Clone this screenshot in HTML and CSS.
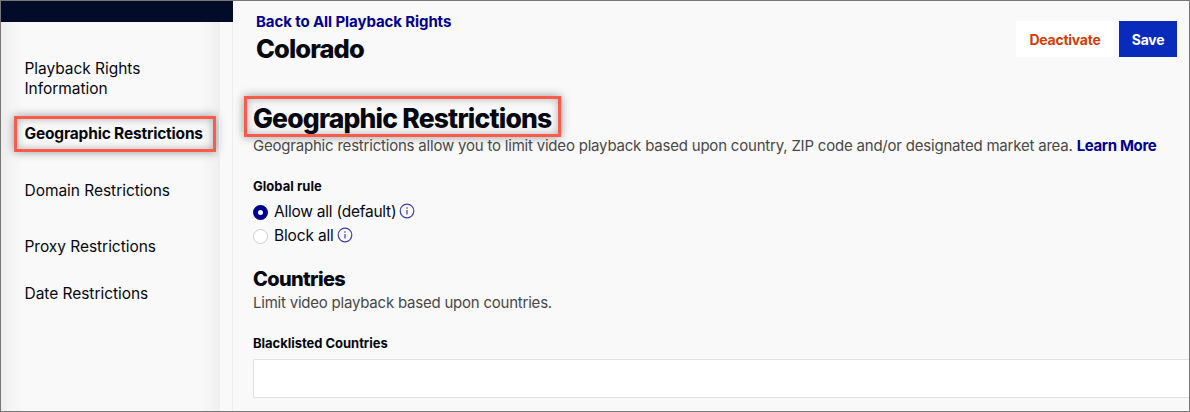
FILE: index.html
```html
<!DOCTYPE html>
<html lang="en">
<head>
<meta charset="utf-8">
<title>Playback Rights</title>
<link rel="stylesheet" href="styles.css">
</head>
<body>
<div class="app">
  <aside class="side">
    <div class="topbar"></div>
    <div class="side-body">
      <nav class="nav">
        <a class="nav-item info">Playback Rights Information</a>
        <a class="nav-item active">Geographic Restrictions</a>
        <a class="nav-item domain">Domain Restrictions</a>
        <a class="nav-item proxy">Proxy Restrictions</a>
        <a class="nav-item date">Date Restrictions</a>
      </nav>
      <div class="gutter"></div>
    </div>
  </aside>
  <main class="main">
    <header class="head">
      <div class="titles">
        <a class="back">Back to All Playback Rights</a>
        <h1 class="name">Colorado</h1>
      </div>
      <div class="actions">
        <button class="btn deactivate">Deactivate</button>
        <button class="btn save">Save</button>
      </div>
    </header>
    <h2 class="section-title">Geographic Restrictions</h2>
    <p class="desc"><span>Geographic restrictions allow you to limit video playback based upon country, ZIP code and/or designated market area.</span><a class="learn">Learn More</a></p>
    <h4 class="label rule-label">Global rule</h4>
    <div class="option">
      <i class="radio on"></i><span class="opt-allow">Allow all (default)</span>
      <svg class="info-icon" viewBox="0 0 16 16"><circle cx="8" cy="8" r="6.8"/><path d="M8 7v4.5M8 4.2v1.5"/></svg>
    </div>
    <div class="option">
      <i class="radio"></i><span class="opt-block">Block all</span>
      <svg class="info-icon" viewBox="0 0 16 16"><circle cx="8" cy="8" r="6.8"/><path d="M8 7v4.5M8 4.2v1.5"/></svg>
    </div>
    <h3 class="countries">Countries</h3>
    <p class="countries-desc">Limit video playback based upon countries.</p>
    <h4 class="label list-label">Blacklisted Countries</h4>
    <div class="field"></div>
  </main>
</div>
</body>
</html>
```
FILE: styles.css
```css
* { box-sizing: border-box; }
body { margin: 0; font-family: Inter, "Liberation Sans", sans-serif; color: #060811; }
h1, h2, h3, h4, p { margin: 0; }
.app { width: 1190px; height: 412px; display: flex; background: #f9f9f9; border: 1px solid #777; overflow: hidden; }
.side { width: 232px; flex: none; display: flex; flex-direction: column; }
.topbar { height: 21px; background: #020b28; flex: none; }
.side-body { flex: 1; display: flex; }
.nav { width: 218px; flex: none; padding-top: 37px; display: flex; flex-direction: column; font-size: 15.5px; line-height: 20px; white-space: nowrap; letter-spacing: -0.04px;
  background: linear-gradient(90deg, #ececec 0, #f5f5f5 11px, #f9f9f9 22px, #f9f9f9 198px, #f5f5f5 208px, #efefef 218px); }
.gutter { flex: 1; border-left: 1px solid #ededed; border-right: 1px solid #ededed; }
.nav-item { padding-left: 23.5px; }
.info { width: 165px; white-space: normal; height: 57px; line-height: 19.5px; }
.active { width: 202px; height: 36px; margin-left: 13px; padding: 5px 0 0 7.5px; font-weight: 700; letter-spacing: -0.19px; border: 3px solid #fb5b4b; box-shadow: 0 0 9px rgba(0,0,0,.4), inset 0 0 9px rgba(0,0,0,.28); }
.domain { margin-top: 29px; }
.proxy { margin-top: 36px; }
.date { margin-top: 27px; }
.main { flex: 1; min-width: 0; padding-left: 20px; white-space: nowrap; }
.head { height: 95px; display: flex; justify-content: space-between; padding: 11px 12px 0 3px; }
.back { display: block; font-size: 15px; line-height: 20px; font-weight: 700; color: #00008f; letter-spacing: -0.1px; }
.name { font-size: 25.5px; line-height: 32px; font-weight: 800; margin-top: 1px; letter-spacing: -0.9px; }
.actions { display: flex; gap: 5px; padding-top: 9px; }
.btn { height: 36px; border: 0; padding: 1px 0 0; font: 700 14px/35px Inter, sans-serif; letter-spacing: -0.25px; }
.deactivate { width: 98px; background: #fff; color: #d23c05; }
.save { width: 58px; background: #082bbc; color: #fff; }
.section-title { width: 317px; height: 41px; margin: 0 0 1px -9px; padding-left: 6px; border: 3px solid #fb5b4b; box-shadow: 0 0 9px rgba(0,0,0,.4), inset 0 0 9px rgba(0,0,0,.28); font-size: 26.5px; line-height: 38px; font-weight: 800; letter-spacing: -0.82px; }
.desc { display: flex; font-size: 15px; line-height: 20px; margin-top: -2px; color: #484848; letter-spacing: -0.205px; }
.learn { margin-left: 4px; color: #00008f; font-weight: 700; letter-spacing: -0.35px; }
.label { font-size: 13px; line-height: 18px; font-weight: 700; }
.rule-label { margin-top: 21px; margin-bottom: 4px; letter-spacing: 0.04px; }
.option { height: 24px; display: flex; align-items: center; font-size: 15.5px; }
.opt-allow { letter-spacing: -0.24px; }
.opt-block { letter-spacing: -0.16px; }
.radio { width: 15px; height: 15px; border-radius: 50%; border: 1px solid #ccc; background: #fff; margin: 2px 6px 0 0; }
.radio.on { border: 5px solid #00008f; }
.info-icon { width: 16px; height: 16px; margin-left: 3px; fill: none; stroke: #3d3db0; stroke-width: 1.2; }
.countries { font-size: 20px; line-height: 28px; font-weight: 800; margin-top: 18px; letter-spacing: -0.65px; }
.countries-desc { font-size: 15px; line-height: 20px; color: #484848; letter-spacing: -0.22px; }
.list-label { margin-top: 21px; letter-spacing: -0.03px; }
.field { height: 39px; margin-top: 7px; background: #fff; border: 1px solid #e2e2e2; border-right: 0; border-radius: 2px 0 0 2px; }
```
